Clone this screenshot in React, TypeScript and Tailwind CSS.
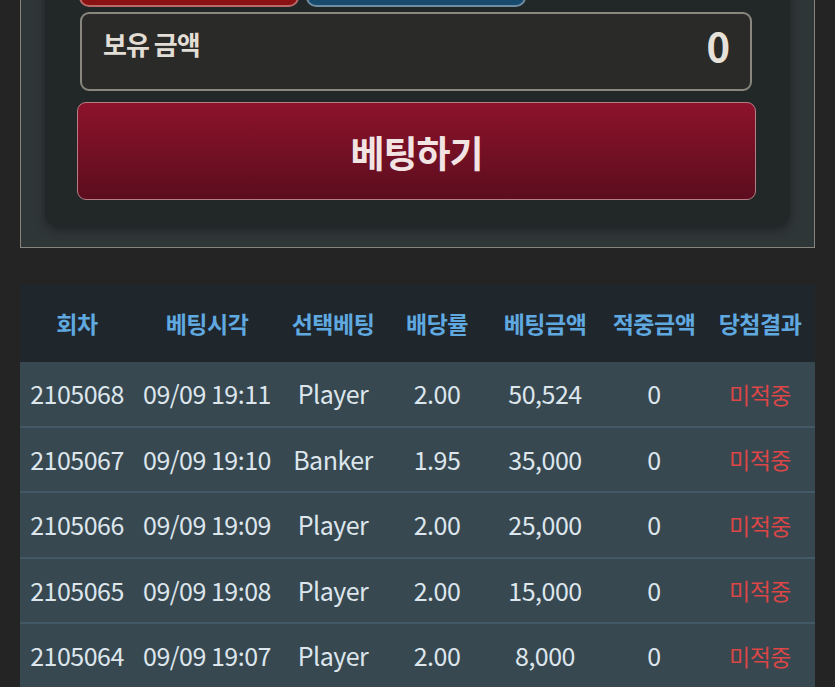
const rows = [
  { round: "2105068", time: "09/09 19:11", pick: "Player", odds: "2.00", amount: "50,524", win: "0", result: "미적중" },
  { round: "2105067", time: "09/09 19:10", pick: "Banker", odds: "1.95", amount: "35,000", win: "0", result: "미적중" },
  { round: "2105066", time: "09/09 19:09", pick: "Player", odds: "2.00", amount: "25,000", win: "0", result: "미적중" },
  { round: "2105065", time: "09/09 19:08", pick: "Player", odds: "2.00", amount: "15,000", win: "0", result: "미적중" },
  { round: "2105064", time: "09/09 19:07", pick: "Player", odds: "2.00", amount: "8,000", win: "0", result: "미적중" },
];

const headers = ["회차", "베팅시각", "선택베팅", "배당률", "베팅금액", "적중금액", "당첨결과"];

const cols = "grid grid-cols-[114px_146px_106px_102px_114px_104px_108px]";

export default function App() {
  return (
    <div
      className="min-h-screen bg-[#232423] overflow-hidden"
      style={{ fontFamily: '"Noto Sans CJK KR", "Noto Sans", sans-serif' }}
    >
      {/* Betting panel */}
      <div className="mx-[20px] mt-[-60px] border border-[#86847c] bg-[#2f3638] px-[24px] pb-[21px]">
        <div className="rounded-b-[14px] bg-[#222727] pb-[26px] pl-[32px] pr-[34px] shadow-[0_4px_10px_rgba(0,0,0,0.35)]">
          {/* choice buttons (cut off at top) */}
          <div className="flex gap-[7px] pl-[2px]">
            <div className="h-[66px] w-[220px] rounded-b-[10px] border-2 border-t-0 border-[#b86a6a] bg-[#8a1212]" />
            <div className="h-[66px] w-[220px] rounded-b-[10px] border-2 border-t-0 border-[#6f8ea3] bg-[#184a6e]" />
          </div>

          {/* balance */}
          <div className="ml-[3px] mr-[4px] mt-[5px] flex h-[79px] items-start justify-between rounded-[9px] border-2 border-[#8a877f] bg-[#2a2a29] pl-[21px] pr-[20px]">
            <span className="mt-[17px] text-[26px] font-bold leading-none text-[#e3ded5] tracking-[-1px]">보유 금액</span>
            <span className="mt-[11px] text-[40px] font-bold leading-none text-[#e6e2da]">0</span>
          </div>

          {/* bet button */}
          <button className="mt-[11px] flex h-[98px] w-full items-center justify-center rounded-[9px] border border-[#b57e84] bg-gradient-to-b from-[#8d132b] to-[#5c0d1e] pt-[3px] text-[37px] font-bold text-[#f3e4e4] tracking-[-1px]">
            베팅하기
          </button>
        </div>
      </div>

      {/* History table */}
      <div className="mx-[20px] mt-[36px]">
        <div className={`${cols} h-[78px] items-center bg-[#1f262c] text-[23px] font-bold text-[#5fa9e0] tracking-[-0.5px]`}>
          {headers.map((h) => (
            <div key={h} className="text-center">{h}</div>
          ))}
        </div>
        {rows.map((r) => (
          <div
            key={r.round}
            className={`${cols} h-[65.5px] items-center border-b-2 border-[#445966] bg-[#384851] text-[25px] text-[#dce6ec] tracking-[-0.5px]`}
          >
            <div className="text-center">{r.round}</div>
            <div className="text-center">{r.time}</div>
            <div className="text-center">{r.pick}</div>
            <div className="text-center">{r.odds}</div>
            <div className="text-center">{r.amount}</div>
            <div className="text-center">{r.win}</div>
            <div className="text-center text-[23px] text-[#dc4646]">{r.result}</div>
          </div>
        ))}
      </div>
    </div>
  );
}
